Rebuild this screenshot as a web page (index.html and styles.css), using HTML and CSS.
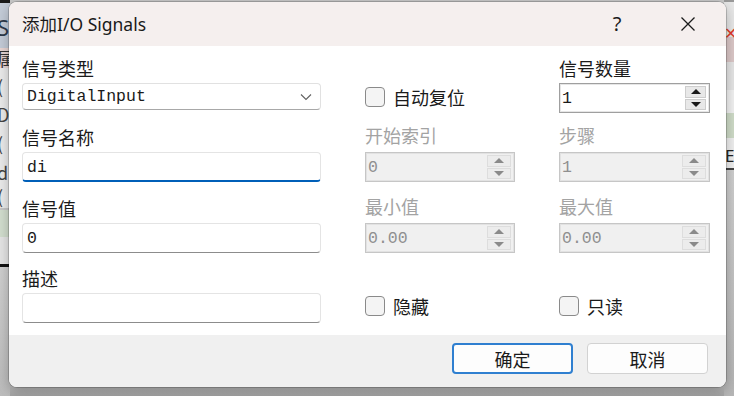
FILE: index.html
```html
<!DOCTYPE html>
<html lang="zh-CN">
<head>
<meta charset="utf-8">
<title>添加I/O Signals</title>
<link rel="stylesheet" href="styles.css">
</head>
<body>
<div class="desktop">
  <div class="bg-left">
    <div class="bl-top"></div>
    <div class="bl-blue"><span>S</span></div>
    <div class="bl-pink"><span>属</span></div>
    <div class="bl-row r-a"><span>(</span></div>
    <div class="bl-row r-b"><span>DC</span></div>
    <div class="bl-row r-c"><span>(</span></div>
    <div class="bl-row r-d"><span>di</span></div>
    <div class="bl-row r-e"><span>(</span></div>
    <div class="bl-green"></div>
    <div class="bl-gap"></div>
    <div class="bl-line"></div>
    <div class="bl-rest"></div>
  </div>
  <div class="bg-right">
    <div class="br-top"><span class="br-x">✕</span></div>
    <div class="br-pink"></div>
    <div class="br-row"></div>
    <div class="br-row2"></div>
    <div class="br-green"></div>
    <div class="br-e"><span>E</span></div>
    <div class="br-line"></div>
    <div class="br-rest"></div>
  </div>

  <div class="window">
    <div class="titlebar">
      <div class="title">添加I/O Signals</div>
      <div class="tb-help">?</div>
      <div class="tb-close">
        <svg width="16" height="16" viewBox="0 0 16 16"><path d="M1.5 1.5 L14.5 14.5 M14.5 1.5 L1.5 14.5" stroke="#1b1b1b" stroke-width="1.3" fill="none"/></svg>
      </div>
    </div>

    <div class="content">
      <div class="lbl c1 r1">信号类型</div>
      <div class="combo c1 r2"><span class="mono">DigitalInput</span>
        <svg class="chev" width="12" height="8" viewBox="0 0 12 8"><path d="M1 1.5 L6 6.5 L11 1.5" stroke="#606060" stroke-width="1.1" fill="none"/></svg>
      </div>

      <div class="lbl c1 r3">信号名称</div>
      <div class="edit focus c1 r4"><span class="mono">di</span></div>

      <div class="lbl c1 r5">信号值</div>
      <div class="edit c1 r6"><span class="mono">0</span></div>

      <div class="lbl c1 r7">描述</div>
      <div class="edit c1 r8"></div>

      <label class="check c2 r2"><span class="box"></span><span>自动复位</span></label>

      <div class="lbl dis c2 r3">开始索引</div>
      <div class="spin disabled c2 r4"><span class="mono">0</span><div class="btns"><span class="up"></span><span class="dn"></span></div></div>

      <div class="lbl dis c2 r5">最小值</div>
      <div class="spin disabled c2 r6"><span class="mono">0.00</span><div class="btns"><span class="up"></span><span class="dn"></span></div></div>

      <label class="check c2 r8"><span class="box"></span><span>隐藏</span></label>

      <div class="lbl c3 r1">信号数量</div>
      <div class="spin c3 r2"><span class="mono">1</span><div class="btns"><span class="up"></span><span class="dn"></span></div></div>

      <div class="lbl dis c3 r3">步骤</div>
      <div class="spin disabled c3 r4"><span class="mono">1</span><div class="btns"><span class="up"></span><span class="dn"></span></div></div>

      <div class="lbl dis c3 r5">最大值</div>
      <div class="spin disabled c3 r6"><span class="mono">0.00</span><div class="btns"><span class="up"></span><span class="dn"></span></div></div>

      <label class="check c3 r8"><span class="box"></span><span>只读</span></label>
    </div>

    <div class="footer">
      <button class="btn primary">确定</button>
      <button class="btn">取消</button>
    </div>
  </div>
</div>
</body>
</html>
```

FILE: styles.css
```css
* { box-sizing: border-box; }
html, body { margin: 0; padding: 0; }
body {
  width: 734px;
  height: 396px;
  overflow: hidden;
  background: #a9a9a9;
  font-family: "Noto Sans CJK SC", "Noto Sans", sans-serif;
}
.desktop {
  position: relative;
  width: 734px;
  height: 396px;
  background: linear-gradient(#c8c8c8 0, #c8c8c8 380px, #a4a4a4 396px);
}

/* background app strips */
.bg-left {
  position: absolute;
  left: 0; top: 0;
  width: 10px; height: 396px;
  display: flex; flex-direction: column;
  overflow: hidden;
  font-size: 18px; color: #333;
  line-height: 1;
}
.bl-top { height: 3px; background: #1a1a1a; flex: none; }
.bl-blue { height: 45px; flex: none; background: #c4ccd8; padding-top: 13px; color: #2e3a4a; font-family: "Noto Sans", sans-serif; font-size: 22px; }
.bl-pink { height: 20px; flex: none; background: #e9d6d4; padding-top: 1px; }
.bl-row { flex: none; background: #ececec; color: #444; display: flex; align-items: center; }
.r-a { height: 35px; }
.r-b { height: 22px; }
.r-c { height: 35px; }
.r-d { height: 23px; }
.r-e { height: 25px; }
.bl-green { height: 27px; flex: none; background: #d3dfcf; margin-top: 2px; }
.bl-gap { height: 27px; flex: none; background: #e6e6e6; }
.bl-line { height: 3px; flex: none; background: #111; }
.bl-rest { flex: 1; background: linear-gradient(#d0d0d0, #bcbcbc); }
.bl-blue span, .bl-row span, .bl-pink span { margin-left: -3px; }

.bg-right {
  position: absolute;
  right: 0; top: 0;
  width: 10px; height: 396px;
  display: flex; flex-direction: column;
  overflow: hidden;
}
.br-top { height: 37px; flex: none; background: #e8e8e8; border-top: 2px solid #9a9a9a; position: relative; }
.br-x { position: absolute; left: 0; top: 22px; color: #e03a2a; font-size: 16px; line-height: 1; }
.br-pink { height: 25px; flex: none; background: #dcc8c8; }
.br-row { height: 28px; flex: none; background: #e6e6e6; }
.br-row2 { height: 23px; flex: none; background: #f2f2f2; }
.br-green { height: 25px; flex: none; background: #cfdcc8; }
.br-e { height: 30px; flex: none; background: #f0f0f0; font-family: "Noto Sans", sans-serif; font-size: 17px; line-height: 36px; color: #222; }
.br-e span { margin-left: 1px; }
.br-line { height: 2px; flex: none; background: #444; }
.br-rest { flex: 1; background: linear-gradient(#cfcfcf, #b6b6b6); }

/* window */
.window {
  position: absolute;
  left: 9px;
  top: 2px;
  width: 717px;
  height: 385px;
  background: #ffffff;
  border-radius: 8px;
  overflow: hidden;
  box-shadow: 0 0 0 1px rgba(0,0,0,0.18), 0 4px 14px rgba(0,0,0,0.28);
  display: flex;
  flex-direction: column;
}
.titlebar {
  height: 44px;
  flex: none;
  background: #f5efee;
  display: flex;
  align-items: center;
  padding-left: 13px;
}
.title {
  flex: 1;
  font-family: "Noto Sans", "Noto Sans CJK SC", sans-serif;
  font-size: 17.5px;
  color: #1a1a1a;
  padding-bottom: 2px;
}
.tb-help {
  width: 46px;
  text-align: center;
  font-family: "Noto Sans", sans-serif;
  font-size: 20px;
  color: #1b1b1b;
  margin-right: 25px;
  padding-bottom: 2px;
}
.tb-close {
  width: 46px;
  height: 44px;
  display: flex;
  align-items: center;
  justify-content: center;
  margin-right: 15px;
}

.content {
  flex: 1;
  display: grid;
  grid-template-columns: 299px 150px 151px;
  column-gap: 44px;
  grid-template-rows: 30px 30px 39px 30px 41px 30px 40px 31px;
  padding: 7px 0 0 13px;
}
.c1 { grid-column: 1; }
.c2 { grid-column: 2; }
.c3 { grid-column: 3; }
.r1 { grid-row: 1; } .r2 { grid-row: 2; } .r3 { grid-row: 3; } .r4 { grid-row: 4; }
.r5 { grid-row: 5; } .r6 { grid-row: 6; } .r7 { grid-row: 7; } .r8 { grid-row: 8; }

.lbl {
  align-self: end;
  font-size: 18px;
  line-height: 24px;
  color: #1a1a1a;
  margin-bottom: 3px;
}
.lbl.dis { color: #a3a3a3; margin-bottom: 5px; }

.mono {
  font-family: "Liberation Mono", "DejaVu Sans Mono", monospace;
  font-size: 16.5px;
  color: #1a1a1a;
}

.combo {
  height: 27px;
  align-self: start;
  background: #fff;
  border: 1px solid #e1e1e1;
  border-bottom-color: #a8a8a8;
  border-radius: 4px;
  display: flex;
  align-items: center;
  padding-left: 4px;
  padding-right: 8px;
}
.combo .mono { flex: 1; }

.edit {
  height: 30px;
  background: #fff;
  border: 1px solid #e4e4e4;
  border-bottom: 1px solid #8c8c8c;
  border-radius: 4px;
  display: flex;
  align-items: center;
  padding-left: 4px;
}
.edit.focus {
  border-bottom: 2px solid #005fb8;
  padding-top: 1px;
}

.spin {
  height: 30px;
  background: #fff;
  border: 1px solid #9f9f9f;
  box-shadow: inset 0 0 0 1px #e6e6e6;
  display: flex;
  align-items: center;
  padding: 2px 3px 2px 2px;
}
.spin .mono { flex: 1; }
.btns {
  width: 21px;
  height: 100%;
  display: flex;
  flex-direction: column;
  gap: 1px;
}
.btns span {
  flex: 1;
  background: #e8e8e8;
  border: 1px solid #cdcdcd;
  display: flex;
  align-items: center;
  justify-content: center;
}
.btns .up::before {
  content: "";
  border-left: 5px solid transparent;
  border-right: 5px solid transparent;
  border-bottom: 5px solid #1a1a1a;
}
.btns .dn::before {
  content: "";
  border-left: 5px solid transparent;
  border-right: 5px solid transparent;
  border-top: 5px solid #1a1a1a;
}
.spin.disabled {
  background: #f0f0f0;
  border-color: #c6c6c6;
  box-shadow: inset 0 0 0 1px #e2e2e2;
}
.spin.disabled .mono { color: #8f8f8f; }
.spin.disabled .btns { width: 24px; }
.spin.disabled .btns span { background: #ececec; border-color: #dddddd; }
.spin.disabled .btns .up::before { border-bottom-color: #8a8a8a; }
.spin.disabled .btns .dn::before { border-top-color: #8a8a8a; }

.check {
  align-self: start;
  margin-top: 2px;
  display: flex;
  align-items: center;
  gap: 8px;
  font-size: 18px;
  line-height: 22px;
  color: #1a1a1a;
}
.box {
  width: 20px;
  height: 20px;
  border: 1px solid #8a8a8a;
  border-radius: 4px;
  background: #f4f4f4;
}
.c2.r2 { margin-top: 3px; }

.footer {
  height: 52px;
  flex: none;
  background: #f0f0f0;
  display: flex;
  justify-content: flex-end;
  align-items: flex-start;
  gap: 14px;
  padding: 8px 18px 0 0;
}
.btn {
  width: 121px;
  height: 31px;
  background: #fdfdfd;
  border: 1px solid #d2d2d2;
  border-radius: 4px;
  font-family: "Noto Sans CJK SC", sans-serif;
  font-size: 18px;
  color: #1a1a1a;
  padding: 0;
  line-height: 1;
}
.btn.primary {
  border: 2px solid #2f7fd0;
}
```
